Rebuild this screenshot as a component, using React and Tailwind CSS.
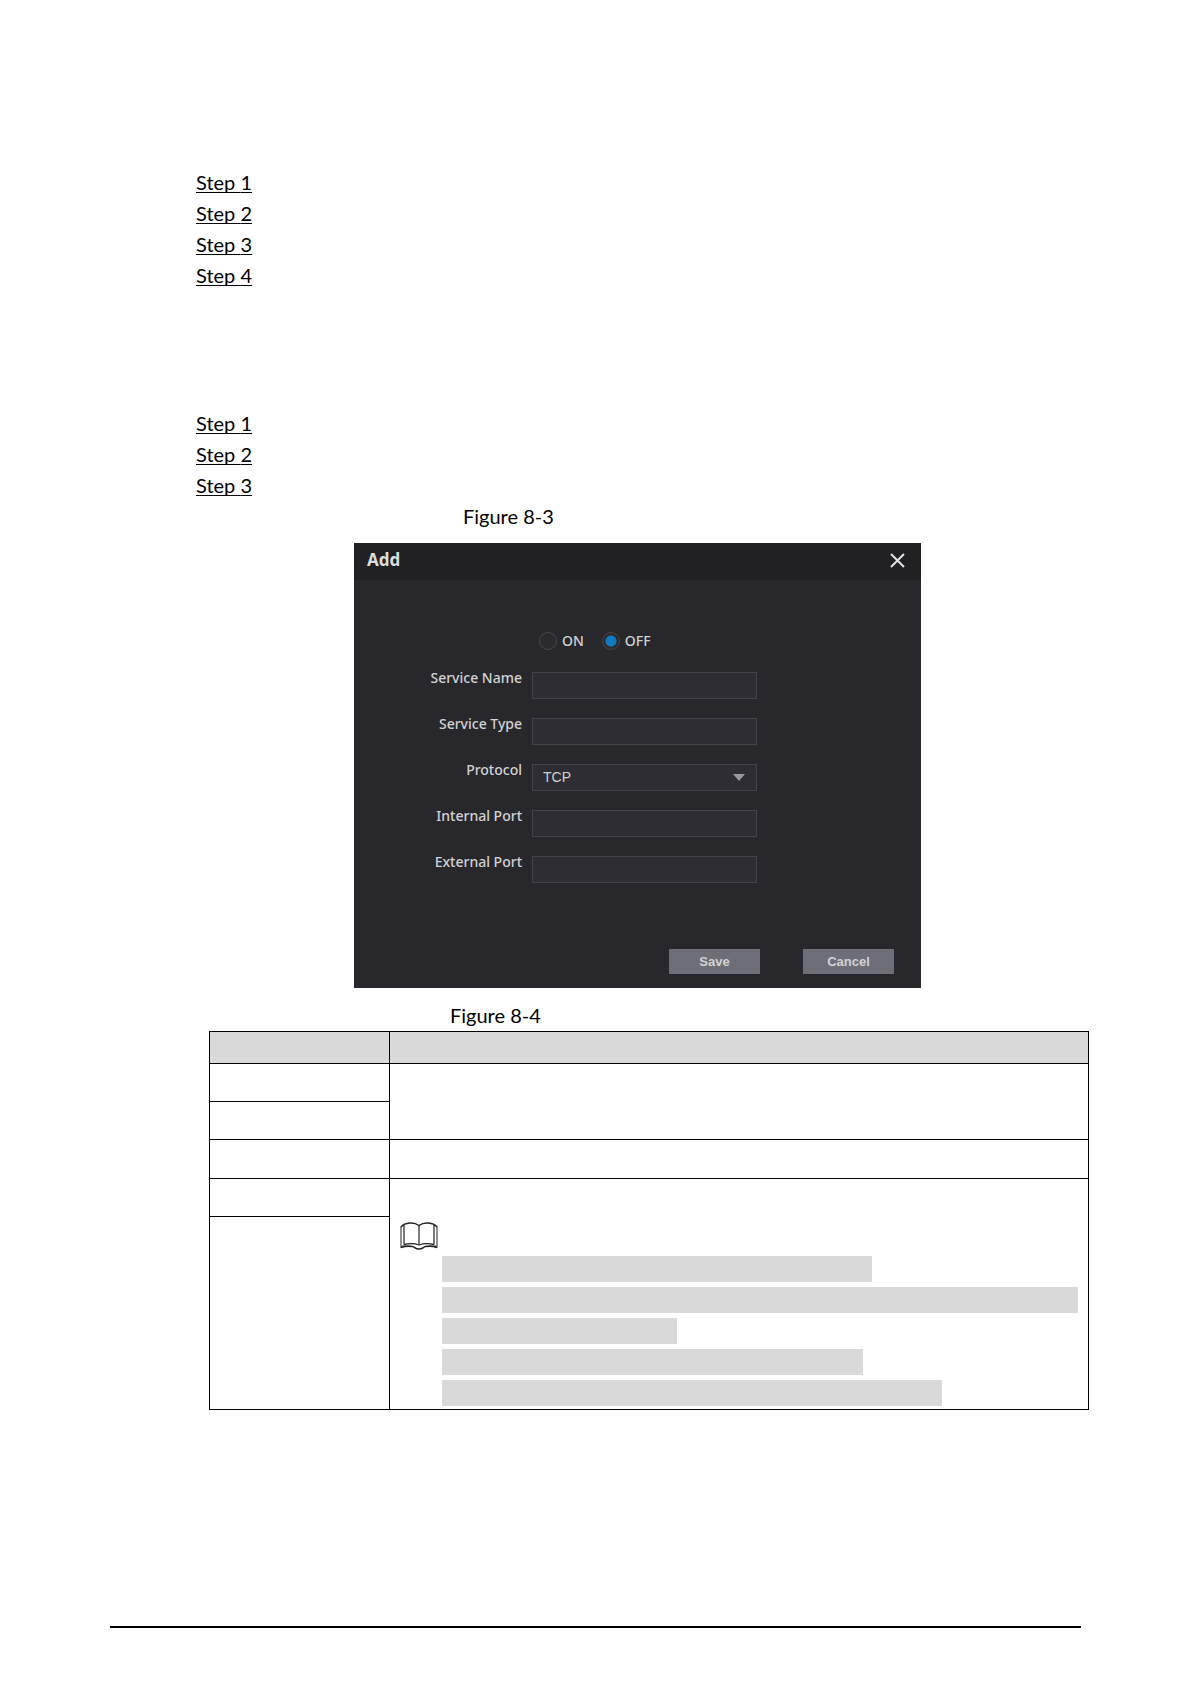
import React, { useState } from 'react'
import clsx from 'clsx'

const textFields = {
  name: 'Service Name',
  type: 'Service Type',
  internalPort: 'Internal Port',
  externalPort: 'External Port',
}

const noteWidths = ['w-[430px]', 'w-[636px]', 'w-[235px]', 'w-[421px]', 'w-[500px]']

function StepList({ count, className }) {
  return (
    <ol className={clsx('pl-[196px]', className)}>
      {Array.from({ length: count }, (_, idx) => (
        <li key={idx}>
          <span className="underline decoration-1 underline-offset-2 [text-decoration-skip-ink:none]">
            Step {idx + 1}
          </span>
        </li>
      ))}
    </ol>
  )
}

function BookIcon() {
  return (
    <svg width="38" height="28" viewBox="0 0 38 28" fill="none" stroke="#222" aria-hidden="true">
      <path d="M1 5C5 .3 14 -.2 19 3.500C24 -.2 33 .3 37 5" strokeWidth="1.5" />
      <path d="M1 4.500V25.500L4 22.500M37 4.500V25.500L34 22.500" strokeWidth="1" />
      <path d="M4 3V22M19 3.500V22.500M34 3V22" strokeWidth="1.2" />
      <path d="M4 22.500C9 21.500 15 21.500 19 23C23 21.500 29 21.500 34 22.500" strokeWidth="1.3" />
      <path d="M1 25.500C5 24 9 23.800 12.500 24.500C15 25 15 27 19 27C23 27 23 25 25.500 24.500C29 23.800 33 24 37 25.500" strokeWidth="1.6" />
    </svg>
  )
}

function RadioOption({ label, checked, onChange }) {
  return (
    <label className="flex items-center gap-[5px]">
      <input
        type="radio"
        name="enabled"
        checked={checked}
        onChange={onChange}
        className="h-[18px] w-[18px] appearance-none rounded-full border border-[#46464a] bg-[#2b2b2d] checked:bg-[radial-gradient(circle,#1179bd_0_5px,#2b2b2d_6px)]"
      />
      {label}
    </label>
  )
}

function FormRow({ id, label, children }) {
  return (
    <div className="flex h-[27px] gap-[10px]">
      <label htmlFor={id} className="w-[168px] text-right leading-3">
        {label}
      </label>
      {children}
    </div>
  )
}

function AddDialog() {
  const [enabled, setEnabled] = useState(false)
  const [values, setValues] = useState({ name: '', type: '', internalPort: '', externalPort: '' })

  const renderField = (key) => (
    <FormRow key={key} id={key} label={textFields[key]}>
      <input
        id={key}
        type="text"
        value={values[key]}
        onChange={(e) => setValues(prev => ({ ...prev, [key]: e.target.value }))}
        className="w-[225px] border border-[#434348] bg-[#2d2d33] px-[10px]"
      />
    </FormRow>
  )

  return (
    <section
      aria-label="Add"
      className="ml-[354px] mt-[11px] w-[567px] bg-[#28282c] pb-[14px] font-['Noto_Sans','Open_Sans',sans-serif] text-[14px] font-medium leading-5 text-[#d2d2d4]"
    >
      <header className="flex h-[37px] items-center justify-between bg-[#212124] pb-[3px] pl-[13px] pr-4">
        <h2 className="text-[17px] font-bold text-[#dddddf]">Add</h2>
        <button type="button" aria-label="Close">
          <svg width="15" height="15" viewBox="0 0 15 15" stroke="#e2e2e4" strokeWidth="2">
            <path d="M1 1L14 14M14 1L1 14" />
          </svg>
        </button>
      </header>

      <form onSubmit={(e) => e.preventDefault()}>
        <div className="flex gap-[18px] pl-[185px] pt-[51px]">
          <RadioOption label="ON" checked={enabled} onChange={() => setEnabled(true)} />
          <RadioOption label="OFF" checked={!enabled} onChange={() => setEnabled(false)} />
        </div>

        <div className="mt-[21px] flex flex-col gap-[19px]">
          {renderField('name')}
          {renderField('type')}
          <FormRow id="protocol" label="Protocol">
            <div className="relative w-[225px]">
              <select
                id="protocol"
                className="block h-full w-full appearance-none border border-[#434348] bg-[#2d2d33] px-[10px] pb-[2px] font-['Liberation_Sans',Arial,sans-serif] font-normal"
              >
                <option>TCP</option>
                <option>UDP</option>
              </select>
              <svg className="pointer-events-none absolute right-3 top-[10px]" width="12" height="7" viewBox="0 0 12 7" fill="#99999c">
                <path d="M0 0H12L6 7Z" />
              </svg>
            </div>
          </FormRow>
          {renderField('internalPort')}
          {renderField('externalPort')}
        </div>

        <div className="mt-[66px] flex justify-end gap-[43px] pr-[27px] font-['Liberation_Sans',Arial,sans-serif] text-[13px] font-bold">
          <button type="submit" className="h-[25px] w-[91px] bg-[#6e6e76]">Save</button>
          <button type="button" className="h-[25px] w-[91px] bg-[#6e6e76]">Cancel</button>
        </div>
      </form>
    </section>
  )
}

function ParameterTable() {
  return (
    <div className="pl-[209px] pr-[102px]">
      <table className="w-full table-fixed border-collapse [&_td]:border [&_td]:border-black [&_th]:border [&_th]:border-black">
        <colgroup>
          <col className="w-[180px]" />
          <col />
        </colgroup>
        <thead>
          <tr className="h-8 bg-[#d9d9d9]">
            <th></th>
            <th></th>
          </tr>
        </thead>
        <tbody>
          <tr className="h-[38px]">
            <td></td>
            <td rowSpan={2}></td>
          </tr>
          <tr className="h-[38px]">
            <td></td>
          </tr>
          <tr className="h-[39px]">
            <td></td>
            <td></td>
          </tr>
          <tr className="h-[38px]">
            <td></td>
            <td rowSpan={2} className="pl-[10px] pr-[10px] pt-[43px] pb-[3px] align-top">
              <BookIcon />
              <ul className="mt-[6px] flex flex-col gap-[5px] pl-[42px]">
                {noteWidths.map((width, idx) => (
                  <li key={idx} className={clsx('h-[26px] max-w-full bg-[#d9d9d9]', width)} />
                ))}
              </ul>
            </td>
          </tr>
          <tr>
            <td></td>
          </tr>
        </tbody>
      </table>
    </div>
  )
}

export default function App() {
  return (
    <main className="bg-white pb-14 pt-[167px] font-['Lato',sans-serif] text-[20px] leading-[31px] text-black">
      <StepList count={4} />
      <StepList count={3} className="mt-[117px]" />
      <p className="pl-[463px]">Figure 8-3</p>
      <AddDialog />
      <p className="mt-3 pl-[450px]">Figure 8-4</p>
      <ParameterTable />
      <hr className="mx-[110px] mt-[216px] border-t-2 border-black" />
    </main>
  )
}
